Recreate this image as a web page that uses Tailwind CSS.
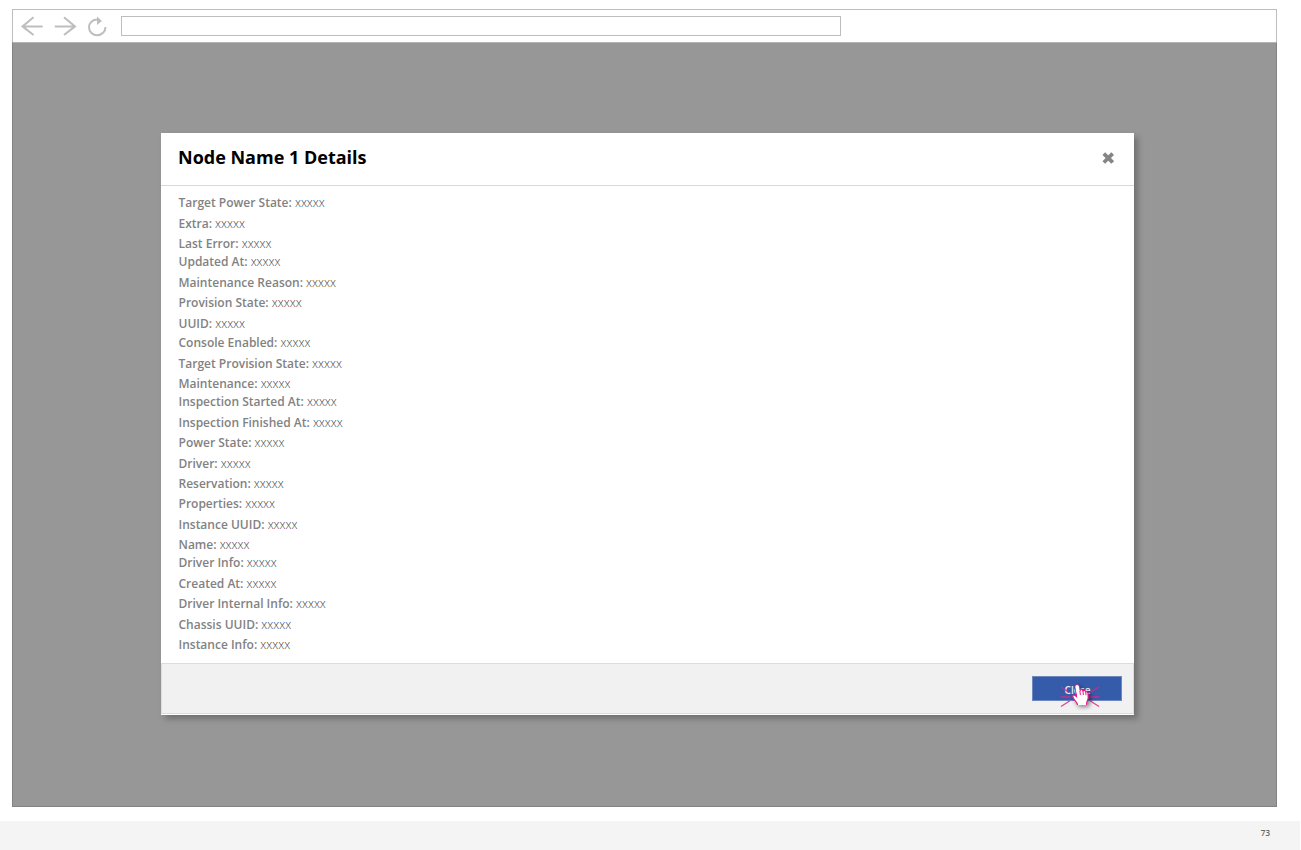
<!DOCTYPE html>
<html lang="en">
<head>
<meta charset="utf-8">
<title>Node Name 1 Details</title>
<script src="https://cdn.jsdelivr.net/npm/@tailwindcss/browser@4"></script>
</head>
<body class="h-[850px] w-[1301px] overflow-hidden bg-white font-['Open_Sans',sans-serif]">
<div class="flex h-[850px] flex-col pt-[9px]">
  <div class="ml-3 flex h-[798px] w-[1265px] flex-col">
    <header class="flex h-[33px] items-start border border-b-0 border-[#bdbdbd] bg-white">
      <svg class="h-[32px] w-[108px] shrink-0" viewBox="13 10 108 32" fill="none" stroke="#bdbfbf" stroke-width="2">
        <path d="M33.5 17.2L22.5 26.4L33.5 35M22.5 26.4H42.7M64 17.2L75 26.4L64 35M75 26.4H54.7"/>
        <path d="M97.5 19.5C92.5 19.5 89 22.7 89 27.2C89 31.8 92.7 35.2 97.3 35.2C101.8 35.2 105.5 31.6 105.5 27"/>
        <path d="M97 16.5L102 21L97 25Z" fill="#bdbfbf" stroke="none"/>
      </svg>
      <div class="mt-[6px] h-5 w-[720px] border border-[#bdbdbd]"></div>
    </header>
    <main class="flex flex-1 items-start border border-[#838383] border-t-[#b4b4b4] bg-[#979797] pt-[90px] pl-[147.5px]">
      <section class="flex h-[582px] w-[973.5px] flex-col bg-white shadow-[4px_4px_6px_rgba(0,0,0,0.25)]">
        <div class="flex h-[53px] items-center justify-between border-b border-[#d9d9d9] pr-5 pl-[17.5px]">
          <h1 class="-mt-[3px] text-[18px] font-bold text-black">Node Name 1 Details</h1>
          <svg class="-mt-0.5 h-3 w-3" viewBox="0 0 12 12" stroke="#858585" stroke-width="3.8"><path d="M1.8 1.6L10.7 10.5M10.7 1.6L1.8 10.5"/></svg>
        </div>
        <ul class="h-[477px] pt-2 pl-[18px] text-[12px] leading-[18px] font-light text-[#404040]">
          <li class="h-[21px]"><b class="font-semibold text-[#828282]">Target Power State:</b> xxxxx</li>
          <li class="h-[20px]"><b class="font-semibold text-[#828282]">Extra:</b> xxxxx</li>
          <li class="h-[18px]"><b class="font-semibold text-[#828282]">Last Error:</b> xxxxx</li>
          <li class="h-[21px]"><b class="font-semibold text-[#828282]">Updated At:</b> xxxxx</li>
          <li class="h-[20px]"><b class="font-semibold text-[#828282]">Maintenance Reason:</b> xxxxx</li>
          <li class="h-[21px]"><b class="font-semibold text-[#828282]">Provision State:</b> xxxxx</li>
          <li class="h-[19px]"><b class="font-semibold text-[#828282]">UUID:</b> xxxxx</li>
          <li class="h-[21px]"><b class="font-semibold text-[#828282]">Console Enabled:</b> xxxxx</li>
          <li class="h-[20px]"><b class="font-semibold text-[#828282]">Target Provision State:</b> xxxxx</li>
          <li class="h-[18px]"><b class="font-semibold text-[#828282]">Maintenance:</b> xxxxx</li>
          <li class="h-[21px]"><b class="font-semibold text-[#828282]">Inspection Started At:</b> xxxxx</li>
          <li class="h-[20px]"><b class="font-semibold text-[#828282]">Inspection Finished At:</b> xxxxx</li>
          <li class="h-[21px]"><b class="font-semibold text-[#828282]">Power State:</b> xxxxx</li>
          <li class="h-[20px]"><b class="font-semibold text-[#828282]">Driver:</b> xxxxx</li>
          <li class="h-[20px]"><b class="font-semibold text-[#828282]">Reservation:</b> xxxxx</li>
          <li class="h-[21px]"><b class="font-semibold text-[#828282]">Properties:</b> xxxxx</li>
          <li class="h-[20px]"><b class="font-semibold text-[#828282]">Instance UUID:</b> xxxxx</li>
          <li class="h-[18px]"><b class="font-semibold text-[#828282]">Name:</b> xxxxx</li>
          <li class="h-[21px]"><b class="font-semibold text-[#828282]">Driver Info:</b> xxxxx</li>
          <li class="h-[20px]"><b class="font-semibold text-[#828282]">Created At:</b> xxxxx</li>
          <li class="h-[21px]"><b class="font-semibold text-[#828282]">Driver Internal Info:</b> xxxxx</li>
          <li class="h-[20px]"><b class="font-semibold text-[#828282]">Chassis UUID:</b> xxxxx</li>
          <li class="h-[20px]"><b class="font-semibold text-[#828282]">Instance Info:</b> xxxxx</li>
        </ul>
        <div class="mb-px flex h-[51px] items-start justify-end border border-[#dcdcdc] bg-[#f1f1f1] pt-[12.4px] pr-[11px]">
          <button class="relative flex h-[25px] w-[90px] items-center justify-center border border-[#6e87bd] bg-[#345cab] pt-[3px] pl-px text-[10px] font-semibold text-white/90">Close
            <svg class="absolute top-[3px] left-[24px] h-[32px] w-[48px] overflow-visible" viewBox="0 0 48 32" fill="none">
              <path d="M4 6.7L11.5 12.3M3.5 17H13.5M4 26.5L13 20.7M42 6.7L33.5 12.3M42.5 17H32M42 26.5L33 20.7" stroke="#e0267f" stroke-opacity=".85" stroke-width="1.3"/>
              <g class="drop-shadow-[2px_2px_2px_rgba(0,0,0,0.45)]">
                <path d="M18.3 6.5C18.5 4.4 21.5 4.4 22 6.5L23 10.5C24 9.2 25.5 9.6 26 10.8C27 10 28.4 10.4 28.8 11.8C30 11.5 31 12.3 31 13.5L31.2 18C31 20 29.8 21 29.3 24.5H20.5C19.5 21 16 19.5 15.7 16C16 14.2 18.2 15.1 19.5 16.5Z" fill="white" stroke="#f5148a" stroke-width="1.2"/>
                <path d="M18.3 7C18.5 4.2 21.5 4.2 22 7L22.7 12L20 14Z" fill="white"/>
                <path d="M21 23.8H29" stroke="white" stroke-width="2.5"/>
                <path d="M22.9 11L23.4 15M26 11L26.4 15M28.8 12L29 15.2" stroke="#f5148a"/>
              </g>
            </svg>
          </button>
        </div>
      </section>
    </main>
  </div>
  <footer class="mt-[14px] flex h-[29px] w-[1300px] items-start justify-end bg-[#f4f4f4] pt-[6px] pr-[30px] text-[8px] leading-3 font-semibold text-[#666]">73</footer>
</div>
</body>
</html>
